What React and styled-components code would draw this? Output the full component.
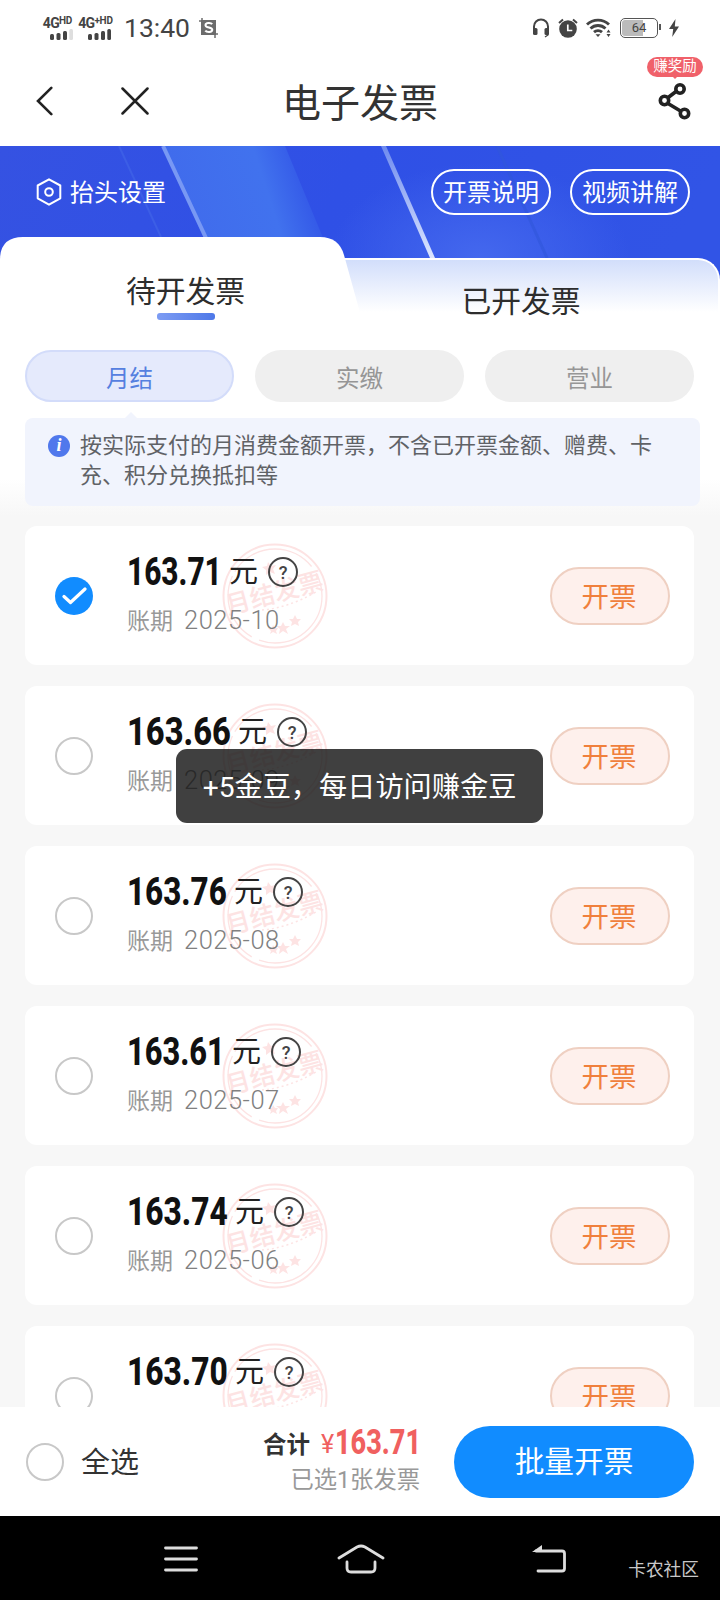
import React, { useState } from 'react';
import styled, { createGlobalStyle, css } from 'styled-components';

const bills = [
  { amount: '163.71', period: '2025-10', width: 94 },
  { amount: '163.66', period: '2025-09', width: 103 },
  { amount: '163.76', period: '2025-08', width: 99 },
  { amount: '163.61', period: '2025-07', width: 97 },
  { amount: '163.74', period: '2025-06', width: 100 },
  { amount: '163.70', period: '2025-05', width: 100 },
];

const filters = ['月结', '实缴', '营业'];

const SignalBars = ({ weak }) => (
  <svg width="23" height="11" viewBox="0 0 23 11" fill="#444">
    <rect x="0" y="5" width="4" height="6" rx="1.5" />
    <rect x="6.5" y="4" width="4" height="7" rx="1.5" />
    <rect x="13" y="2" width="4" height="9" rx="1.5" />
    <rect x="19.3" y="0" width="3.7" height="11" rx="1.5" fill={weak ? '#dedede' : '#444'} />
  </svg>
);

const CropIcon = () => (
  <svg width="20" height="20" viewBox="0 0 20 20">
    <path d="M2 2h15v15H2z" fill="#6c6c6c" />
    <path d="M0 3h5M3 0v5M15 16h4M16 14v6" stroke="#6c6c6c" strokeWidth="1.5" />
    <path
      d="M13.2 6.2C12 4.6 6.500 4.400 6.500 7.200c0 3 6.800 1.600 6.800 4.600 0 2.900-5.600 2.700-7 .8"
      fill="none"
      stroke="#fff"
      strokeWidth="2"
    />
  </svg>
);

const HeadsetIcon = () => (
  <svg width="18" height="20" viewBox="0 0 18 20">
    <path d="M2 12V8.500a7 7 0 0 1 14 0V12" fill="none" stroke="#444" strokeWidth="2" />
    <rect x="1" y="10" width="4.500" height="7" rx="1.500" fill="#444" />
    <rect x="12.500" y="10" width="4.500" height="7" rx="1.500" fill="#444" />
    <path d="M16 15v2l-3 2" fill="none" stroke="#444" strokeWidth="1.300" />
  </svg>
);

const AlarmIcon = () => (
  <svg width="20" height="20" viewBox="0 0 20 20">
    <circle cx="10" cy="11" r="8.800" fill="#444" />
    <path d="M1 5l4-3.500M19 5l-4-3.500" stroke="#444" strokeWidth="2" />
    <path d="M9.800 6.500v6h4.500" fill="none" stroke="#fff" strokeWidth="1.700" />
  </svg>
);

const WifiIcon = () => (
  <svg width="26" height="20" viewBox="0 0 26 20" fill="none" stroke="#444" strokeWidth="2.900">
    <path d="M1 6.500a16 16 0 0 1 22 0" />
    <path d="M4.500 10.500a11 11 0 0 1 15 0" />
    <path d="M8 14.200a6 6 0 0 1 8 0" />
    <path d="M9.500 16.200h5L12 19z" fill="#444" stroke="none" />
    <path d="M20.500 14.500l2-3 2 3zM20.500 16l2 3 2-3z" fill="#444" stroke="none" />
  </svg>
);

const BoltIcon = () => (
  <svg width="10" height="18" viewBox="0 0 10 18" fill="#444">
    <path d="M6.500 0L0 10h4.200L3.200 18 10 7.500H5.800z" />
  </svg>
);

const BackIcon = () => (
  <svg width="17" height="30" viewBox="0 0 17 30" fill="none" stroke="#222" strokeWidth="2.600">
    <path d="M15.300 1.800L2 15l13.300 13.200" strokeLinecap="round" />
  </svg>
);

const CloseIcon = () => (
  <svg width="28" height="28" viewBox="0 0 28 28" stroke="#222" strokeWidth="2.500">
    <path d="M1.500 1.500l25 25M26.500 1.500l-25 25" strokeLinecap="round" />
  </svg>
);

const ShareIcon = () => (
  <svg width="34" height="38" viewBox="0 0 34 38" fill="none" stroke="#222" strokeWidth="3.600">
    <path d="M18 9.500L9.500 16M10 21.500l12.500 7.500" />
    <circle cx="22" cy="7" r="4.200" />
    <circle cx="6.500" cy="18.500" r="4.200" />
    <circle cx="26.500" cy="31.500" r="4.200" />
  </svg>
);

const HexIcon = () => (
  <svg width="26" height="28" viewBox="0 0 26 28" fill="none" stroke="#fff" strokeWidth="2">
    <path d="M13 1.300L24.300 7.500v12.800L13 26.700 1.700 20.300V7.500z" strokeLinejoin="round" />
    <circle cx="13" cy="14" r="3.800" />
  </svg>
);

const CheckIcon = () => (
  <svg width="26" height="20" viewBox="0 0 26 20" fill="none" stroke="#fff" strokeWidth="3.200">
    <path d="M3 10.500l6.500 6L24 3" strokeLinecap="round" strokeLinejoin="round" />
  </svg>
);

const BannerArt = () => (
  <svg width="720" height="140" viewBox="0 0 720 140">
    <defs>
      <linearGradient id="sky" x1="0" x2="1" y1="0" y2="0.100">
        <stop offset="0" stopColor="#3552e2" />
        <stop offset="0.500" stopColor="#2f50e6" />
        <stop offset="1" stopColor="#3154e6" />
      </linearGradient>
      <linearGradient id="beam" gradientUnits="userSpaceOnUse" x1="165" y1="40" x2="305" y2="-5">
        <stop offset="0" stopColor="#406bec" />
        <stop offset="0.650" stopColor="#4172ee" />
        <stop offset="1" stopColor="#3052e6" />
      </linearGradient>
      <radialGradient id="glow">
        <stop offset="0" stopColor="#4468ee" />
        <stop offset="1" stopColor="#4468ee" stopOpacity="0" />
      </radialGradient>
      <linearGradient id="ray" x1="0" x2="0" y1="0" y2="1">
        <stop offset="0" stopColor="#6e8bef" />
        <stop offset="1" stopColor="#dce6ff" />
      </linearGradient>
    </defs>
    <path d="M0 0h720v140H0z" fill="url(#sky)" />
    <path d="M163 0h122l58 140H225z" fill="url(#beam)" />
    <ellipse cx="480" cy="112" rx="150" ry="95" fill="url(#glow)" />
    <path d="M119 0l42 91" stroke="#3c5ee6" strokeWidth="2" />
    <path d="M163 0l43 92" stroke="#7898f4" strokeWidth="4" />
    <path d="M381 0h5l49 112h-5z" fill="url(#ray)" />
    <path d="M497 0l50 112" stroke="#3157db" strokeWidth="3" opacity="0.600" />
  </svg>
);

const TabShape = () => (
  <svg width="362" height="97" viewBox="0 0 362 97">
    <path d="M0 97V23Q0 0 23 0H320Q339 0 344 18L359 72V97z" fill="#fff" />
  </svg>
);

const Stamp = () => (
  <svg width="106" height="108" viewBox="0 0 106 108" fill="none" stroke="#fde3e3">
    <circle cx="53" cy="54" r="51.500" strokeWidth="2" />
    <circle cx="53" cy="54" r="47" strokeWidth="1.300" strokeDasharray="90 8 70 5" />
    <path d="M40 68Q66 66 94 50" strokeWidth="1.500" strokeDasharray="2 3" />
    <g fill="#fde3e3" stroke="none">
      <path d="M46 20l3 4 5-1-3 4 2 5-5-2-4 3v-5l-4-3 5-1z" />
      <path d="M61 80l2 4 5 0-4 3 2 5-5-3-4 3 1-5-4-3 5 0z" />
      <path d="M73 73l2 4 4 0-3 3 1 4-4-2-4 2 1-4-3-3 4 0z" />
      <path d="M51 83l2 3 3 0-2 3 1 3-4-2-3 2 1-3-3-3 4 0z" />
      <text x="53" y="60" textAnchor="middle" transform="rotate(-15 53 54)">
        月结发票
      </text>
    </g>
  </svg>
);

const MenuIcon = () => (
  <svg width="34" height="26" viewBox="0 0 34 26" stroke="#ddd" strokeWidth="2.800">
    <path d="M1.500 2h31M1.500 13h31M1.500 24h31" strokeLinecap="round" />
  </svg>
);

const HomeIcon = () => (
  <svg width="48" height="30" viewBox="0 0 48 30" fill="none" stroke="#ddd" strokeWidth="2.800">
    <path d="M2 14L20 3q4-2 8 0l18 11" strokeLinecap="round" />
    <path d="M10 18v6q0 4 4 4h20q4 0 4-4v-6" strokeLinecap="round" />
  </svg>
);

const ReturnIcon = () => (
  <svg width="35" height="28" viewBox="0 0 35 28" fill="none" stroke="#ddd" strokeWidth="2.800">
    <path d="M4 6h26q2.500 0 2.500 2.500v15q0 2.500-2.500 2.500H6" strokeLinecap="round" />
    <path d="M0 7L10 0v7z" fill="#ddd" stroke="none" />
  </svg>
);

const App = () => {
  const [activeFilter, setActiveFilter] = useState('月结');
  const [selected, setSelected] = useState('2025-10');

  return (
    <>
      <GlobalStyle />
      <Screen>
        <StatusBar>
          <Network>
            <NetworkLabel>4G<sup>HD</sup></NetworkLabel>
            <SignalBars weak />
          </Network>
          <Network>
            <NetworkLabel>4G<sup>+HD</sup></NetworkLabel>
            <SignalBars />
          </Network>
          <Clock>13:40</Clock>
          <CropIcon />
          <StatusIcons>
            <HeadsetIcon />
            <AlarmIcon />
            <WifiIcon />
            <Battery>64</Battery>
            <BoltIcon />
          </StatusIcons>
        </StatusBar>

        <Header>
          <HeaderActions>
            <BackIcon />
            <CloseIcon />
          </HeaderActions>
          <Title>电子发票</Title>
          <Share>
            <ShareIcon />
            <RewardBadge>赚奖励</RewardBadge>
          </Share>
        </Header>

        <Banner>
          <BannerBackdrop>
            <BannerArt />
          </BannerBackdrop>
          <TitleSetting>
            <HexIcon />
            <span>抬头设置</span>
          </TitleSetting>
          <OutlineButton>开票说明</OutlineButton>
          <OutlineButton>视频讲解</OutlineButton>
        </Banner>

        <Tabs>
          <Tab $active>
            <TabBackdrop>
              <TabShape />
            </TabBackdrop>
            <TabLabel>待开发票</TabLabel>
            <TabUnderline />
          </Tab>
          <Tab>
            <TabLabel>已开发票</TabLabel>
          </Tab>
        </Tabs>

        <FilterPanel>
          <Filters>
            {filters.map((name) => (
              <FilterPill
                key={name}
                $active={name === activeFilter}
                onClick={() => setActiveFilter(name)}
              >
                {name}
              </FilterPill>
            ))}
          </Filters>
          <Notice>
            <InfoDot>i</InfoDot>
            <NoticeText>
              按实际支付的月消费金额开票，不含已开票金额、赠费、卡
              <br />
              充、积分兑换抵扣等
            </NoticeText>
          </Notice>
        </FilterPanel>

        <BillList>
          {bills.map((bill) => (
            <BillCard key={bill.period}>
              <Radio
                $checked={bill.period === selected}
                onClick={() => setSelected(bill.period)}
              >
                {bill.period === selected && <CheckIcon />}
              </Radio>
              <BillInfo>
                <StampMark>
                  <Stamp />
                </StampMark>
                <AmountRow>
                  <Amount $width={bill.width}>
                    <span>{bill.amount}</span>
                  </Amount>
                  <Unit>元</Unit>
                  <HelpDot>?</HelpDot>
                </AmountRow>
                <Period>
                  账期<PeriodDate>{bill.period}</PeriodDate>
                </Period>
              </BillInfo>
              <InvoiceButton>开票</InvoiceButton>
            </BillCard>
          ))}
        </BillList>

        <Footer>
          <Radio />
          <SelectAll>全选</SelectAll>
          <Summary>
            <Total>
              合计
              <Currency>¥</Currency>
              <Amount $small $width={85}>
                <span>163.71</span>
              </Amount>
            </Total>
            <Count>已选1张发票</Count>
          </Summary>
          <BatchButton>批量开票</BatchButton>
        </Footer>

        <NavBar>
          <MenuIcon />
          <HomeIcon />
          <ReturnIcon />
          <Watermark>卡农社区</Watermark>
        </NavBar>

        <Toast>+5金豆，每日访问赚金豆</Toast>
      </Screen>
    </>
  );
};

export default App;

const GlobalStyle = createGlobalStyle`
  * {
    box-sizing: border-box;
  }

  body {
    margin: 0;
    font-family: Roboto, 'Noto Sans CJK SC', sans-serif;
    font-weight: 400;
    color: #333;
  }

  svg {
    display: block;
    flex: none;
  }

  button {
    font-family: inherit;
    padding: 0;
  }
`;

const Screen = styled.div`
  position: relative;
  display: flex;
  flex-direction: column;
  width: 720px;
  height: 1600px;
  overflow: hidden;
  background: #f7f7f7;
`;

const StatusBar = styled.div`
  display: flex;
  align-items: center;
  height: 56px;
  padding: 0 41px 0 42px;
  background: #fff;
  flex: none;
`;

const Network = styled.div`
  display: flex;
  flex-direction: column;
  align-items: center;
  width: 38px;
`;

const NetworkLabel = styled.div`
  font: 700 14px/12px Roboto, sans-serif;
  letter-spacing: -0.7px;
  white-space: nowrap;
  color: #444;
  margin-left: -7px;

  sup {
    font-size: 10px;
    line-height: 0;
    vertical-align: 4px;
    letter-spacing: -0.2px;
  }
`;

const Clock = styled.div`
  width: 67px;
  margin: 0 8px 0 6px;
  font: 400 26.5px/30px Roboto, sans-serif;
  white-space: nowrap;
  color: #444;
`;

const StatusIcons = styled.div`
  display: flex;
  align-items: center;
  gap: 8px;
  margin-left: auto;
`;

const Battery = styled.div`
  position: relative;
  width: 38px;
  height: 20px;
  border: 1.5px solid #555;
  border-radius: 5px;
  background: linear-gradient(to right, #bbb 62%, #fff 62%);
  background-clip: content-box;
  padding: 1px;
  margin-right: 3px;
  font: 400 13px/16px Roboto, sans-serif;
  text-align: center;
  color: #444;

  &::after {
    content: '';
    position: absolute;
    right: -4px;
    top: 5px;
    width: 2px;
    height: 6px;
    background: #555;
  }
`;

const Header = styled.header`
  display: grid;
  grid-template-columns: 200px 1fr 200px;
  align-items: center;
  height: 90px;
  background: #fff;
  flex: none;
`;

const HeaderActions = styled.div`
  display: flex;
  align-items: center;
  gap: 68px;
  padding-left: 36px;
`;

const Title = styled.h1`
  margin: 6px 0 0;
  font-size: 39px;
  line-height: 56px;
  font-weight: 400;
  text-align: center;
`;

const Share = styled.div`
  position: relative;
  justify-self: end;
  padding-right: 28px;
`;

const RewardBadge = styled.span`
  position: absolute;
  right: 17px;
  top: -25px;
  width: 56px;
  height: 20px;
  border-radius: 10px;
  background: #f0616a;
  font-size: 14.5px;
  line-height: 20px;
  text-align: center;
  white-space: nowrap;
  color: #fff;

  &::after {
    content: '';
    position: absolute;
    left: 25px;
    top: 19px;
    border: 3px solid transparent;
    border-top-color: #f0616a;
  }
`;

const Banner = styled.div`
  position: relative;
  display: flex;
  align-items: center;
  gap: 19px;
  height: 91px;
  padding: 1px 30px 0 36px;
  flex: none;
`;

const BannerBackdrop = styled.div`
  position: absolute;
  left: 0;
  top: 0;
`;

const TitleSetting = styled.div`
  position: relative;
  display: flex;
  align-items: center;
  gap: 8px;
  margin-right: auto;
  font-size: 24px;
  line-height: 30px;
  color: #fff;

  span {
    padding-top: 2px;
  }
`;

const OutlineButton = styled.button`
  position: relative;
  width: 120px;
  height: 46px;
  padding-top: 2px;
  border: 2px solid #fff;
  border-radius: 23px;
  background: none;
  font-size: 24px;
  line-height: 38px;
  white-space: nowrap;
  color: #fff;
`;

const Tabs = styled.div`
  position: relative;
  display: flex;
  align-items: flex-end;
  height: 97px;
  flex: none;
`;

const Tab = styled.div`
  position: relative;
  display: flex;
  flex-direction: column;
  align-items: center;
  ${(props) =>
    props.$active
      ? css`
          z-index: 1;
          width: 322px;
          height: 97px;
          margin-right: -2px;
          padding: 34px 0 0 49px;
        `
      : css`
          width: 400px;
          height: 76px;
          padding: 21px 0 0 4px;
          border-top: 2px solid #fff;
          border-right: 2px solid #fff;
          border-radius: 0 22px 0 0;
          background: linear-gradient(#d2defb, #fff 52px);
        `}
`;

const TabBackdrop = styled.div`
  position: absolute;
  left: 0;
  top: 0;
`;

const TabLabel = styled.span`
  position: relative;
  font-size: 29.8px;
  line-height: 42px;
  color: #2d2d2d;
`;

const TabUnderline = styled.span`
  position: relative;
  width: 58px;
  height: 7px;
  border-radius: 3px;
  background: linear-gradient(to right, #7d9cf3, #4e78e8);
`;

const FilterPanel = styled.div`
  padding: 16px 20px 20px 25px;
  background: linear-gradient(#fff 145px, #f7f7f7 182px);
  flex: none;
`;

const Filters = styled.div`
  display: grid;
  grid-template-columns: repeat(3, 209px);
  gap: 21px;
`;

const FilterPill = styled.button`
  height: 52px;
  padding-top: 2px;
  border: ${(props) => (props.$active ? '2px solid #d3dcfa' : '0')};
  border-radius: 26px;
  background: ${(props) => (props.$active ? '#e5eafc' : '#efefef')};
  font-size: 23.5px;
  color: ${(props) => (props.$active ? '#5580e0' : '#969696')};
`;

const Notice = styled.div`
  position: relative;
  display: flex;
  height: 88px;
  margin-top: 16px;
  padding: 13px 0 0 23px;
  border-radius: 8px;
  background: #f1f4fd;

  &::before {
    content: '';
    position: absolute;
    left: 100px;
    top: -12px;
    border: 6px solid transparent;
    border-bottom-color: #f1f4fd;
  }
`;

const InfoDot = styled.span`
  width: 22px;
  height: 22px;
  margin: 4px 10px 0 0;
  border-radius: 50%;
  background: #5078ec;
  font: italic 700 18px/21px 'Liberation Serif', serif;
  text-align: center;
  color: #fff;
  flex: none;
`;

const NoticeText = styled.p`
  margin: 0;
  font-size: 22px;
  line-height: 30px;
  white-space: nowrap;
  color: #606266;
`;

const BillList = styled.div`
  display: flex;
  flex-direction: column;
  gap: 21px;
  flex: 1;
  min-height: 0;
  padding: 0 26px 0 25px;
  overflow: hidden;
`;

const BillCard = styled.div`
  display: flex;
  align-items: center;
  height: 139px;
  padding: 0 24px 0 30px;
  border-radius: 12px;
  background: #fff;
  flex: none;
`;

const Radio = styled.span`
  display: flex;
  align-items: center;
  justify-content: center;
  width: 38px;
  height: 38px;
  border: ${(props) => (props.$checked ? '0' : '2px solid #c8c8c8')};
  border-radius: 50%;
  background: ${(props) => (props.$checked ? '#118cff' : '#fff')};
  flex: none;
`;

const BillInfo = styled.div`
  position: relative;
  flex: 1;
  height: 100%;
  margin-left: 34px;
  padding-top: 25px;
`;

const StampMark = styled.div`
  position: absolute;
  left: 95px;
  top: 16px;

  text {
    font: 500 25px 'Noto Sans CJK SC', sans-serif;
  }
`;

const AmountRow = styled.div`
  position: relative;
  display: flex;
  align-items: center;
  height: 42px;
`;

const Amount = styled.span`
  display: inline-block;
  width: ${(props) => props.$width}px;
  height: 42px;
  font: 800 ${(props) => (props.$small ? 35 : 39)}px/42px Roboto, sans-serif;
  color: ${(props) => (props.$small ? '#f0605f' : '#111')};

  span {
    display: inline-block;
    transform: scaleX(${(props) => props.$width / (props.$small ? 110 : 123)});
    transform-origin: 0 50%;
  }
`;

const Unit = styled.span`
  margin-left: 8px;
  font-size: 29px;
  line-height: 42px;
  color: #222;
`;

const HelpDot = styled.span`
  width: 30px;
  height: 30px;
  margin: 0 0 0 10px;
  border: 2px solid #444;
  border-radius: 50%;
  font: 500 18px/27px Roboto, sans-serif;
  text-align: center;
  color: #444;
`;

const Period = styled.div`
  position: relative;
  margin-top: 9px;
  font-size: 23px;
  line-height: 36px;
  white-space: nowrap;
  color: #999;
`;

const PeriodDate = styled.span`
  margin-left: 11px;
  font-size: 25.5px;
  font-weight: 300;
  letter-spacing: 0.5px;
  color: #808080;
`;

const InvoiceButton = styled.button`
  width: 120px;
  height: 58px;
  padding: 0 2px 2px 0;
  border: 2px solid #efd0c2;
  border-radius: 29px;
  background: #fef0ec;
  font-size: 27.5px;
  color: #f0803c;
`;

const Footer = styled.footer`
  display: flex;
  align-items: center;
  height: 109px;
  padding: 0 26px;
  background: #fff;
  flex: none;
`;

const SelectAll = styled.span`
  margin: 0 0 4px 17px;
  font-size: 29px;
`;

const Summary = styled.div`
  display: flex;
  flex-direction: column;
  align-items: flex-end;
  margin: 0 34px 0 auto;
`;

const Total = styled.div`
  display: flex;
  align-items: center;
  height: 37px;
  font-size: 23.5px;
  font-weight: 700;
`;

const Currency = styled.span`
  width: 14px;
  margin: 3px 0 0 11px;
  font-size: 25px;
  font-weight: 400;
  color: #f0605f;
`;

const Count = styled.span`
  font-size: 23.3px;
  line-height: 38px;
  color: #999;
`;

const BatchButton = styled.button`
  width: 240px;
  height: 72px;
  padding-bottom: 4px;
  border: 0;
  border-radius: 36px;
  background: #118cff;
  font-size: 29.7px;
  color: #fff;
`;

const NavBar = styled.nav`
  position: relative;
  display: flex;
  align-items: center;
  height: 84px;
  padding: 1px 0 0 164px;
  gap: 139px;
  background: #000;
  flex: none;

  svg:nth-of-type(3) {
    margin-left: 8px;
  }
`;

const Watermark = styled.span`
  position: absolute;
  right: 21px;
  bottom: 17px;
  font-size: 17.7px;
  line-height: 26px;
  color: #c8c8c8;
`;

const Toast = styled.div`
  position: absolute;
  left: 176px;
  top: 749px;
  width: 367px;
  height: 74px;
  padding-top: 3px;
  border-radius: 11px;
  background: rgba(22, 22, 22, 0.82);
  font-size: 28.2px;
  line-height: 72px;
  text-align: center;
  white-space: nowrap;
  color: #fff;
`;
